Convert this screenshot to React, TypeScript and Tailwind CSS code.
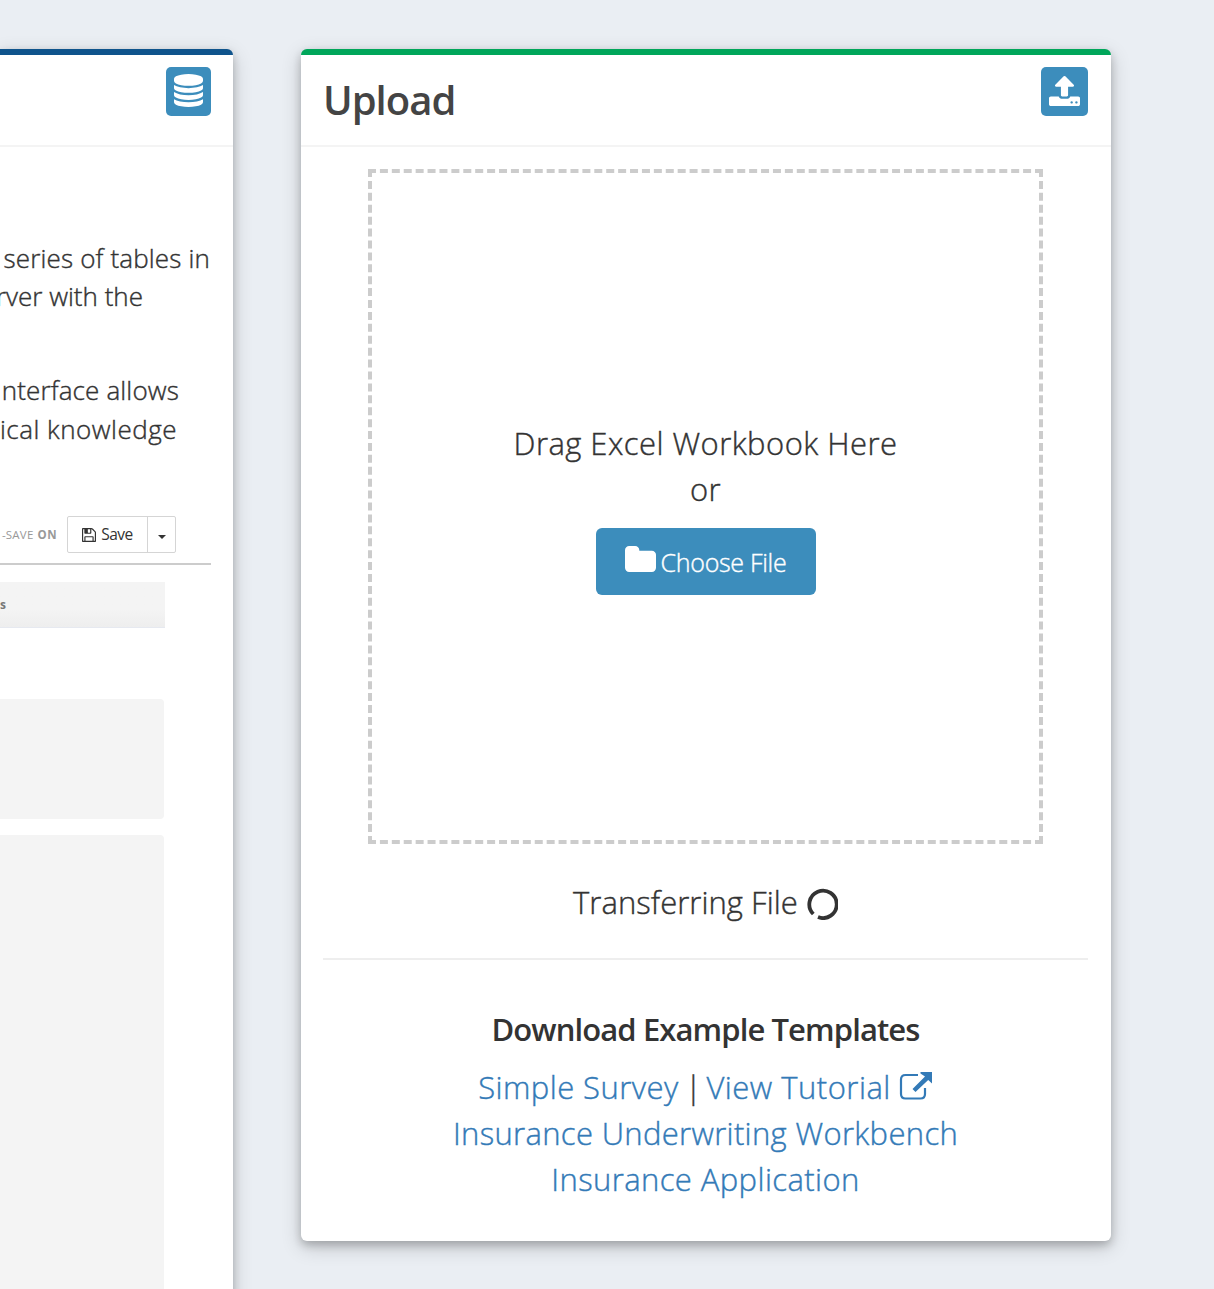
import React from "react";

const shadow = "shadow-[0_4px_8px_rgba(0,0,0,0.2),0_6px_20px_rgba(0,0,0,0.19)]";

function DatabaseIcon() {
  return (
    <svg className="h-[33px] w-[29px]" viewBox="0 0 1536 1792" preserveAspectRatio="none" fill="currentColor">
      <path d="M768 768q237 0 443-43t325-127v170q0 69-103 128t-280 93.5-385 34.5-385-34.5-280-93.5-103-128v-170q119 84 325 127t443 43zm0 768q237 0 443-43t325-127v170q0 69-103 128t-280 93.5-385 34.5-385-34.5-280-93.5-103-128v-170q119 84 325 127t443 43zm0-384q237 0 443-43t325-127v170q0 69-103 128t-280 93.5-385 34.5-385-34.5-280-93.5-103-128v-170q119 84 325 127t443 43zm0-1152q208 0 385 34.5t280 93.5 103 128v128q0 69-103 128t-280 93.5-385 34.5-385-34.5-280-93.5-103-128v-128q0-69 103-128t280-93.5 385-34.5z" />
    </svg>
  );
}

function UploadIcon() {
  return (
    <svg className="h-[30px] w-[31px]" viewBox="0 64 1664 1600" preserveAspectRatio="none" fill="currentColor">
      <path d="M1280 1472q0-26-19-45t-45-19-45 19-19 45 19 45 45 19 45-19 19-45zm256 0q0-26-19-45t-45-19-45 19-19 45 19 45 45 19 45-19 19-45zm128-224v320q0 40-28 68t-68 28h-1472q-40 0-68-28t-28-68v-320q0-40 28-68t68-28h427q21 56 70.500 92t110.500 36h256q61 0 110.500-36t70.500-92h427q40 0 68 28t28 68zm-325-648q-17 40-59 40h-256v448q0 26-19 45t-45 19h-256q-26 0-45-19t-19-45v-448h-256q-42 0-59-40-17-39 14-69l448-448q18-19 45-19t45 19l448 448q31 30 14 69z" />
    </svg>
  );
}

function FolderIcon() {
  return (
    <svg className="mr-[5px] h-[26px] w-[31px] -translate-y-[3px]" viewBox="0 128 1664 1408" preserveAspectRatio="none" fill="currentColor">
      <path d="M1664 608v704q0 92-66 158t-158 66h-1216q-92 0-158-66t-66-158v-960q0-92 66-158t158-66h320q92 0 158 66t66 158v32h672q92 0 158 66t66 158z" />
    </svg>
  );
}

function FloppyIcon() {
  return (
    <svg className="h-3.5 w-3.5" viewBox="0 128 1536 1536" fill="currentColor">
      <path d="M384 1536h768v-384h-768v384zm896 0h128v-896q0-14-10-38.5t-20-34.5l-281-281q-10-10-34-20t-39-10v416q0 40-28 68t-68 28h-576q-40 0-68-28t-28-68v-416h-128v1280h128v-416q0-40 28-68t68-28h832q40 0 68 28t28 68v416zm-384-928v-320q0-13-9.500-22.500t-22.500-9.500h-192q-13 0-22.500 9.500t-9.500 22.500v320q0 13 9.500 22.500t22.500 9.500h192q13 0 22.500-9.500t9.500-22.500zm640 32v928q0 40-28 68t-68 28h-1344q-40 0-68-28t-28-68v-1344q0-40 28-68t68-28h928q40 0 88 20t76 48l280 280q28 28 48 76t20 88z" />
    </svg>
  );
}

function ExternalIcon() {
  return (
    <svg className="ml-2 h-[30px] w-[34px] shrink-0 -translate-y-[1px]" viewBox="0 0 34 30" fill="none">
      <path d="M19 4H6.500Q2 4 2 8.500V23Q2 27.500 6.500 27.500H21.500Q26 27.500 26 23V17" stroke="currentColor" strokeWidth="2.200" />
      <path d="M21.500 1H33V12.500L29.200 8.900L16.500 21L13.500 18L26 5.600L21.500 2.500Z" fill="currentColor" />
    </svg>
  );
}

function Spinner() {
  return (
    <svg className="ml-2 h-8 w-8 shrink-0 translate-y-[2px]" viewBox="0 0 32 32" fill="none">
      <path d="M7.300 26A13.700 13.700 0 1 1 12 29.100" stroke="#333" strokeWidth="3.800" />
    </svg>
  );
}

function Header({ title, icon }: { title?: string; icon: React.ReactNode }) {
  return (
    <header className="flex h-[92px] items-start justify-between border-b-2 border-[#f4f4f4] pl-[22px] pt-3">
      <h2 className="text-[40px] font-semibold leading-[65px] tracking-[-1px] text-[#444]">{title}</h2>
      {icon}
    </header>
  );
}

export default function App() {
  return (
    <main className="flex h-[1289px] w-[1214px] items-start gap-[68px] overflow-hidden bg-[#eaeef3] pt-[49px] font-['Open_Sans',sans-serif] font-light text-[#333]">
      <section className={`h-[1300px] w-[233px] shrink-0 rounded-tr-[6px] border-t-[6px] border-[#0f548c] bg-white ${shadow}`}>
        <Header
          icon={
            <button className="mr-[22px] flex h-[49px] w-[45px] items-center justify-center rounded-[5px] bg-[#3c8dbc] pb-[2px] text-white">
              <DatabaseIcon />
            </button>
          }
        />
        <div className="flex flex-col overflow-hidden pt-[92px] text-[26px] leading-[38px] [-webkit-text-stroke:0.4px]">
          <p className="flex w-[210px] justify-end whitespace-nowrap tracking-[0.15px]">series of tables in</p>
          <p className="flex w-[143px] justify-end whitespace-nowrap">rver with the</p>
          <p className="mt-14 flex w-[179px] justify-end whitespace-nowrap tracking-[0.15px]">nterface allows</p>
          <p className="mt-px flex w-[177px] justify-end whitespace-nowrap tracking-[0.5px]">ical knowledge</p>
        </div>
        <div className="mt-[67px] flex h-[50px] w-[211px] items-start overflow-hidden border-b-2 border-[#ccc] pt-px">
          <div className="flex h-[38px] w-[57px] shrink-0 items-center justify-end gap-1 whitespace-nowrap text-[11.5px] font-normal text-[#999]">
            <span className="tracking-[0.2px]">-SAVE</span>
            <b className="tracking-[0.5px]">ON</b>
          </div>
          <div className="ml-2.5 flex h-[37px] w-[109px] shrink-0 rounded-[2px] border border-[#d5d5d5] text-[15.5px]">
            <button className="flex w-20 items-center justify-center gap-[5px] border-r border-[#d5d5d5] font-normal tracking-[-0.5px]">
              <FloppyIcon />
              Save
            </button>
            <button className="flex flex-1 items-center justify-center pt-1">
              <span className="border-x-4 border-t-4 border-x-transparent border-t-[#333]" />
            </button>
          </div>
        </div>
        <div className="mt-[17px] flex h-[46px] w-[165px] items-center border-b border-[#e6e9f0] bg-linear-to-b from-[#f4f4f4] from-60% to-[#eeeeee] pt-px text-[12px] font-bold text-[#777]">
          s
        </div>
        <div className="mt-[71px] h-[120px] w-[164px] rounded-r-[4px] bg-[#f4f4f4]" />
        <div className="mt-4 h-[470px] w-[164px] rounded-tr-[4px] bg-[#f4f4f4]" />
      </section>

      <section className={`h-[1192px] w-[810px] shrink-0 rounded-[6px] border-t-[6px] border-[#00a65a] bg-white ${shadow}`}>
        <Header
          title="Upload"
          icon={
            <button className="mr-[23px] flex h-[49px] w-[47px] items-center justify-center rounded-[5px] bg-[#3c8dbc] pb-[2px] text-white">
              <UploadIcon />
            </button>
          }
        />
        <div className="ml-[22px] mr-[23px] flex flex-col items-center pt-[22px] text-[31px] leading-[46px] [-webkit-text-stroke:0.4px]">
          <div className="flex h-[675px] w-[675px] flex-col items-center border-4 border-dashed border-[#ccc] pt-[247px]">
            <p className="whitespace-nowrap tracking-[0.45px]">Drag Excel Workbook Here</p>
            <p className="whitespace-nowrap tracking-[0.3px]">or</p>
            <button className="mt-4 flex h-[67px] w-[220px] items-center justify-center rounded-[6px] bg-[#3c8dbc] text-[25px] tracking-[-0.3px] text-white">
              <FolderIcon />
              Choose File
            </button>
          </div>
          <p className="mt-[35px] flex h-[46px] items-center whitespace-nowrap tracking-[0.05px]">
            Transferring File
            <Spinner />
          </p>
          <hr className="mt-[33px] w-full border-t-2 border-[#eee]" />
          <h3 className="mt-[46px] whitespace-nowrap font-semibold tracking-[-0.9px] [-webkit-text-stroke:0]">Download Example Templates</h3>
          <p className="mt-3 flex items-center whitespace-pre text-[#337ab7]">
            <a className="tracking-[0.45px]">Simple Survey</a>
            <span className="tracking-[-1.7px] text-[#333]"> | </span>
            <a className="flex items-center tracking-[0.5px]">
              View Tutorial
              <ExternalIcon />
            </a>
          </p>
          <a className="whitespace-nowrap tracking-[0.33px] text-[#337ab7]">Insurance Underwriting Workbench</a>
          <a className="whitespace-nowrap tracking-[0.4px] text-[#337ab7]">Insurance Application</a>
        </div>
      </section>
    </main>
  );
}
